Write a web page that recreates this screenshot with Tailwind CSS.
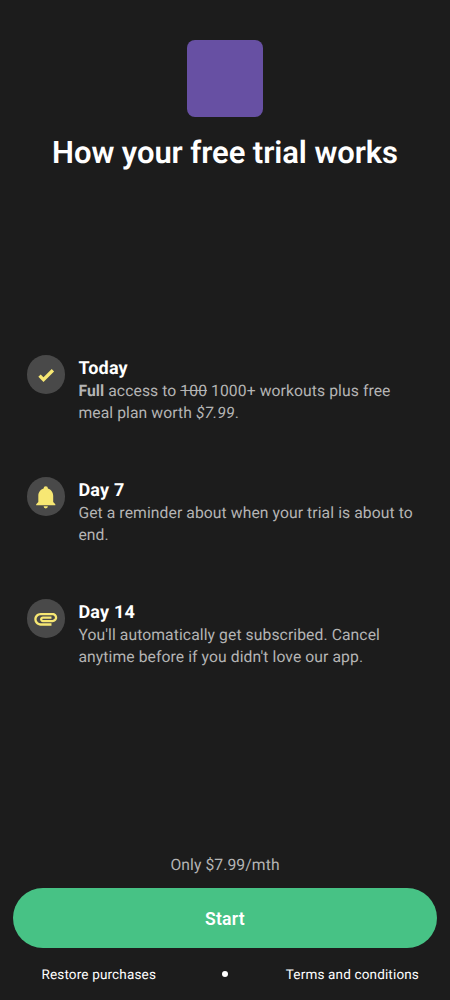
<!DOCTYPE html>
<html lang="en"><head><meta charset="utf-8"><title>Free trial</title>
<script src="https://cdn.jsdelivr.net/npm/@tailwindcss/browser@4"></script></head>
<body class="bg-[#1c1c1c] font-[Roboto,sans-serif] [text-rendering:geometricPrecision]">
<main class="flex h-[1000px] w-[450px] flex-col items-center overflow-hidden bg-[#1c1c1c] pt-10 text-white">
<div class="size-[76.8px] shrink-0 rounded-lg bg-[#6750a3]"></div>
<h1 class="mt-[16.2px] text-[31px] leading-[40px] font-semibold tracking-[-0.08px] whitespace-nowrap">How your free trial works</h1>
<section class="mt-[182.4px] flex w-full flex-col pl-[26.6px]">
<div class="flex h-[122px] gap-[13.4px]">
<div class="flex size-[38.4px] shrink-0 items-center justify-center rounded-full bg-[#494949]"><svg class="size-[20px]" viewBox="0 0 24 24" fill="#f7e773"><path d="m9 20.42-6.21-6.21 2.83-2.83L9 14.77l9.88-9.89 2.83 2.83z"/></svg></div>
<div class="pt-[3px]"><h2 class="text-[18px] leading-[22px] font-bold tracking-[0.2px]">Today</h2><p class="text-[15.7px] leading-[22px] tracking-[0.09px] whitespace-nowrap text-[#b4b4b4]"><b>Full</b> access to <s>100</s> 1000+ workouts plus free<br>meal plan worth <i>$7.99</i>.</p></div></div>
<div class="flex h-[122px] gap-[13.4px]">
<div class="flex size-[38.4px] shrink-0 items-center justify-center rounded-full bg-[#494949]"><svg class="size-[25.5px]" viewBox="0 0 24 24" fill="#f7e773"><path d="M21 19v1H3v-1l2-2v-6c0-3.1 2.03-5.83 5-6.71V4a2 2 0 0 1 4 0v.29c2.97.88 5 3.61 5 6.71v6l2 2m-7 2a2 2 0 0 1-4 0"/></svg></div>
<div class="pt-[3px]"><h2 class="text-[18px] leading-[22px] font-bold tracking-[0.2px]">Day 7</h2><p class="text-[15.7px] leading-[22px] tracking-[0.09px] whitespace-nowrap text-[#b4b4b4]">Get a reminder about when your trial is about to<br>end.</p></div></div>
<div class="flex h-[122px] gap-[13.4px]">
<div class="flex size-[38.4px] shrink-0 items-center justify-center rounded-full bg-[#494949]"><svg class="size-[27.5px]" viewBox="0 0 24 24" fill="#f7e773"><path d="M2 12.5C2 9.46 4.46 7 7.5 7H18c2.21 0 4 1.79 4 4s-1.79 4-4 4H9.5C8.12 15 7 13.88 7 12.5S8.12 10 9.5 10H17v2H9.41c-.55 0-.55 1 0 1H18c1.1 0 2-.9 2-2s-.9-2-2-2H7.5C5.57 9 4 10.57 4 12.5S5.57 16 7.5 16H17v2H7.5C4.46 18 2 15.54 2 12.5z"/></svg></div>
<div class="pt-[3px]"><h2 class="text-[18px] leading-[22px] font-bold tracking-[0.2px]">Day 14</h2><p class="text-[15.7px] leading-[22px] tracking-[0.09px] whitespace-nowrap text-[#b4b4b4]">You'll automatically get subscribed. Cancel<br>anytime before if you didn't love our app.</p></div></div>
</section>
<p class="mt-auto text-[15.7px] leading-[22px] tracking-[0.09px] text-[#b4b4b4]">Only $7.99/mth</p>
<button class="mt-3 h-[59.5px] w-[423.4px] shrink-0 rounded-full bg-[#47c285] pt-[3px] text-[17.6px] font-semibold tracking-[0.25px]">Start</button>
<footer class="grid h-[52.5px] w-full shrink-0 grid-cols-[1fr_6px_1fr] items-center text-[13.5px] tracking-[0.16px]"><span class="pt-[3px] pl-[41.5px]">Restore purchases</span><span class="size-[6px] rounded-full bg-white"></span><span class="pt-[3px] pr-[31px] text-right">Terms and conditions</span></footer>
</main></body></html>
